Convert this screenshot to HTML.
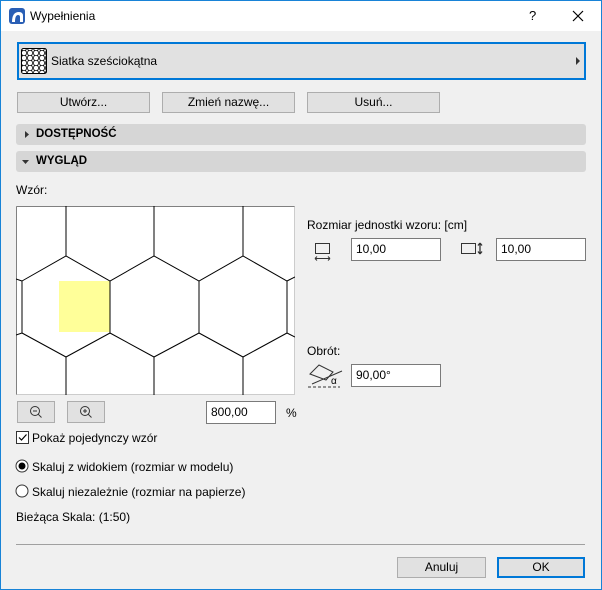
<!DOCTYPE html>
<html><head><meta charset="utf-8"><style>
*{box-sizing:border-box;margin:0;padding:0}
body{width:602px;height:590px;background:#f0f0f0;font-family:"Liberation Sans",sans-serif;font-size:12px;color:#000;position:relative;overflow:hidden}
.a{position:absolute}
.win{left:0;top:0;width:602px;height:590px;border:1px solid #1883d7}
.btn{position:absolute;background:#e1e1e1;border:1px solid #adadad;text-align:center;line-height:18px;font-size:12px}
.inp{position:absolute;background:#fff;border:1px solid #7a7a7a;line-height:20px;padding-left:4px;font-size:12px}
.bar{position:absolute;left:16px;width:570px;height:21px;background:#d6d6d6;border-radius:3px;font-weight:bold;font-size:11.5px;line-height:21px;padding-left:20px}
</style></head><body>
<div class="a win"></div>
<div class="a" style="left:1px;top:1px;width:600px;height:30px;background:#fff"></div>
<svg class="a" style="left:9px;top:8px" width="16" height="16"><rect x="0" y="0" width="16" height="16" rx="3" fill="#2a5fb5"/><path d="M3 14 Q3 4 10 4 Q14 4 14 8 L14 14 L11 14 L11 9 Q11 7 9 7 Q6 7 6 14Z" fill="#fff"/></svg>
<div class="a" style="left:30px;top:9px;font-size:12px">Wypełnienia</div>
<div class="a" style="left:529px;top:8px;font-size:13px">?</div>
<svg class="a" style="left:572px;top:10px" width="12" height="12"><path d="M1 1L11 11M11 1L1 11" stroke="#000" stroke-width="1.2"/></svg>

<div class="a" style="left:17px;top:42px;width:569px;height:38px;background:#e1e1e1;border:2px solid #0078d7"></div>
<svg class="a" style="left:21px;top:48px" width="26" height="26"><defs><pattern id="h" width="6" height="5" patternUnits="userSpaceOnUse"><path d="M0 0L1.5 2.5L0 5M6 0L4.5 2.5L6 5M1.5 2.5H4.5" stroke="#000" stroke-width="0.8" fill="none"/></pattern></defs><rect x="0.5" y="0.5" width="25" height="25" rx="2" fill="#fff" stroke="#000"/><rect x="1" y="1" width="24" height="24" fill="url(#h)"/></svg>
<div class="a" style="left:51px;top:54px;font-size:12px">Siatka sześciokątna</div>
<svg class="a" style="left:576px;top:57px" width="5" height="8"><path d="M0 0L4 4L0 8Z" fill="#333"/></svg>

<div class="btn" style="left:17px;top:92px;width:133px;height:21px">Utwórz...</div>
<div class="btn" style="left:162px;top:92px;width:133px;height:21px">Zmień nazwę...</div>
<div class="btn" style="left:307px;top:92px;width:133px;height:21px">Usuń...</div>

<div class="bar" style="top:124px">DOSTĘPNOŚĆ</div>
<svg class="a" style="left:25px;top:131px" width="4" height="7"><path d="M0 0L4 3.5L0 7Z" fill="#333"/></svg>
<div class="bar" style="top:151px">WYGLĄD</div>
<svg class="a" style="left:22px;top:160px" width="7" height="4"><path d="M0 0L7 0L3.5 4Z" fill="#333"/></svg>

<div class="a" style="left:16px;top:183px">Wzór:</div>
<svg class="a" style="left:16px;top:206px" width="279" height="189">
<rect x="0.5" y="0.5" width="278" height="188" fill="#fff" stroke="#ccc"/>
<path d="M0.5 0.5H278.5M0.5 0.5V188.5" stroke="#808080" fill="none"/>
<rect x="43" y="75" width="51" height="51" fill="#ffff99"/>
<g stroke="#000" stroke-width="1" fill="none">
<path d="M50 0V50M138 0V50M227 0V50M50 151V189M138 151V189M227 151V189"/>
<path d="M6 75L50 50L94 75L138 50L183 75L227 50L271 75L279 71"/>
<path d="M6 127L50 151L94 127L138 151L183 127L227 151L271 127L279 131"/>
<path d="M6 75V127M94 75V127M183 75V127M271 75V127"/>
<path d="M0 73L6 75M0 129L6 127"/>
</g></svg>

<div class="btn" style="left:17px;top:401px;width:38px;height:22px"></div>
<svg class="a" style="left:29px;top:405px" width="14" height="14"><circle cx="6" cy="6" r="4.5" stroke="#333" fill="none"/><path d="M4 6H8M9.3 9.3L12.5 12.5" stroke="#333"/></svg>
<div class="btn" style="left:67px;top:401px;width:38px;height:22px"></div>
<svg class="a" style="left:79px;top:405px" width="14" height="14"><circle cx="6" cy="6" r="4.5" stroke="#333" fill="none"/><path d="M4 6H8M6 4V8M9.3 9.3L12.5 12.5" stroke="#333"/></svg>
<div class="inp" style="left:206px;top:401px;width:70px;height:23px">800,00</div>
<div class="a" style="left:286px;top:406px">%</div>

<div class="a" style="left:16px;top:431px;width:13px;height:13px;border:1px solid #333;background:#fff"></div>
<svg class="a" style="left:17px;top:432px" width="11" height="11"><path d="M2 5.5L4.5 8L9.5 2.5" stroke="#000" stroke-width="1.2" fill="none"/></svg>
<div class="a" style="left:32px;top:431px">Pokaż pojedynczy wzór</div>
<svg class="a" style="left:15px;top:459px" width="14" height="14"><circle cx="7" cy="7" r="6" fill="#fff" stroke="#333"/><circle cx="7" cy="7" r="3.5" fill="#000"/></svg>
<div class="a" style="left:32px;top:460px">Skaluj z widokiem (rozmiar w modelu)</div>
<svg class="a" style="left:15px;top:484px" width="14" height="14"><circle cx="7" cy="7" r="6" fill="#fff" stroke="#333"/></svg>
<div class="a" style="left:32px;top:485px">Skaluj niezależnie (rozmiar na papierze)</div>
<div class="a" style="left:16px;top:510px">Bieżąca Skala: (1:50)</div>

<div class="a" style="left:307px;top:218px">Rozmiar jednostki wzoru: [cm]</div>
<svg class="a" style="left:312px;top:240px" width="22" height="22"><rect x="3.5" y="3.5" width="14" height="10" fill="none" stroke="#333"/><path d="M3 18.5H18M3 18.5L5 16.5M3 18.5L5 20.5M18 18.5L16 16.5M18 18.5L16 20.5" stroke="#333" fill="none"/></svg>
<div class="inp" style="left:351px;top:238px;width:90px;height:23px">10,00</div>
<svg class="a" style="left:460px;top:240px" width="26" height="18"><rect x="1.5" y="3.5" width="14" height="10" fill="none" stroke="#333"/><path d="M20 3V14M20 3L18 5.5M20 3L22 5.5M20 14L18 11.5M20 14L22 11.5" stroke="#333" stroke-width="1.3" fill="none"/></svg>
<div class="inp" style="left:496px;top:238px;width:90px;height:23px">10,00</div>

<div class="a" style="left:307px;top:344px">Obrót:</div>
<svg class="a" style="left:307px;top:362px" width="36" height="28"><path d="M3 12L12 3L26 10L19 18Z" fill="none" stroke="#333"/><path d="M5 22L35 9" stroke="#333"/><path d="M1 25H33" stroke="#333" stroke-dasharray="3 2"/><text x="24" y="22" font-size="10" font-family="Liberation Sans,sans-serif">α</text></svg>
<div class="inp" style="left:351px;top:364px;width:90px;height:23px">90,00°</div>

<div class="a" style="left:16px;top:544px;width:569px;height:1px;background:#a0a0a0"></div>
<div class="btn" style="left:397px;top:557px;width:89px;height:21px">Anuluj</div>
<div class="btn" style="left:497px;top:557px;width:88px;height:21px;border:2px solid #0078d7;line-height:17px">OK</div>
</body></html>
